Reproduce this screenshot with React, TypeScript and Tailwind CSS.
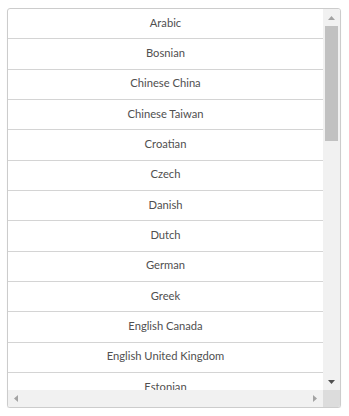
import React from "react";

const languages = [
  "Arabic",
  "Bosnian",
  "Chinese China",
  "Chinese Taiwan",
  "Croatian",
  "Czech",
  "Danish",
  "Dutch",
  "German",
  "Greek",
  "English Canada",
  "English United Kingdom",
  "Estonian",
];

function Arrow({ dir, color }: { dir: "up" | "down" | "left" | "right"; color: string }) {
  const points = {
    up: "0,4 3.5,0 7,4",
    down: "0,0 3.5,4 7,0",
    left: "4,0 0,3.5 4,7",
    right: "0,0 4,3.5 0,7",
  }[dir];
  const vertical = dir === "up" || dir === "down";
  return (
    <svg width={vertical ? 7 : 4} height={vertical ? 4 : 7} viewBox={vertical ? "0 0 7 4" : "0 0 4 7"}>
      <polygon points={points} fill={color} />
    </svg>
  );
}

export default function App() {
  return (
    <div className="pl-[7px] pt-[8px]">
      <div className="w-[334px] h-[400px] border border-[#cccccc] rounded-[3px] overflow-hidden flex flex-col bg-white shadow-[0_1px_1px_rgba(0,0,0,0.08)]">
        <div className="flex flex-1 min-h-0">
          <ul className="flex-1 overflow-hidden" style={{ fontFamily: 'Lato, sans-serif' }}>
            {languages.map((lang) => (
              <li
                key={lang}
                className="h-[30.33px] border-b border-[#d4d4d4] flex items-center justify-center pb-[1px] text-[11.2px] text-[#505050]"
              >
                {lang}
              </li>
            ))}
          </ul>
          <div className="w-[17px] bg-[#f1f1f1] flex flex-col">
            <div className="h-[17px] flex items-center justify-center">
              <Arrow dir="up" color="#a3a3a3" />
            </div>
            <div className="flex-1 px-[2px]">
              <div className="h-[115px] bg-[#c1c1c1]" />
            </div>
            <div className="h-[17px] flex items-center justify-center">
              <Arrow dir="down" color="#505050" />
            </div>
          </div>
        </div>
        <div className="h-[17px] flex">
          <div className="flex-1 bg-[#f1f1f1] flex items-center justify-between px-[6px]">
            <Arrow dir="left" color="#a3a3a3" />
            <Arrow dir="right" color="#a3a3a3" />
          </div>
          <div className="w-[17px] bg-[#dcdcdc]" />
        </div>
      </div>
    </div>
  );
}
